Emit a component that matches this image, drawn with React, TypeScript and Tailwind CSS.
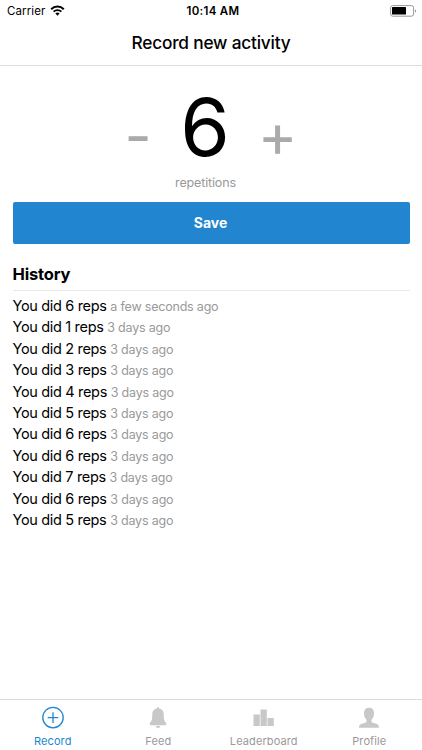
import React from 'react'

interface HistoryEntry {
  id: number
  reps: number
  when: string
}

const history: HistoryEntry[] = [
  { id: 11, reps: 6, when: 'a few seconds ago' },
  { id: 10, reps: 1, when: '3 days ago' },
  { id: 9, reps: 2, when: '3 days ago' },
  { id: 8, reps: 3, when: '3 days ago' },
  { id: 7, reps: 4, when: '3 days ago' },
  { id: 6, reps: 5, when: '3 days ago' },
  { id: 5, reps: 6, when: '3 days ago' },
  { id: 4, reps: 6, when: '3 days ago' },
  { id: 3, reps: 7, when: '3 days ago' },
  { id: 2, reps: 6, when: '3 days ago' },
  { id: 1, reps: 5, when: '3 days ago' },
]

function WifiIcon() {
  return (
    <svg className="-mt-px" width="15" height="11" viewBox="0 0 14 11" fill="none" stroke="#000">
      <path d="M0.7 4.2a8.9 8.9 0 0 1 12.6 0" strokeWidth="2" />
      <path d="M3.1 6.7a5.5 5.5 0 0 1 7.8 0" strokeWidth="1.8" />
      <path d="M7 10.7L4.9 8.6a3 3 0 0 1 4.2 0z" fill="#000" stroke="none" />
    </svg>
  )
}

function BatteryIcon() {
  return (
    <svg width="27" height="12" viewBox="0 0 27 12">
      <rect x="0.6" y="0.6" width="23" height="10.6" rx="2.2" fill="#fff" stroke="#999" />
      <rect x="2" y="2" width="14" height="7.6" rx="0.6" fill="#000" />
      <path d="M25 4.2c1.4.5 1.4 3 0 3.5z" fill="#999" />
    </svg>
  )
}

function RecordIcon() {
  return (
    <svg width="24" height="24" viewBox="0 0 24 24" fill="none" stroke="#2185d0" strokeWidth="1.3">
      <circle cx="12" cy="11.6" r="10.2" />
      <path d="M12 6.3v10.6M6.7 11.6h10.6" />
    </svg>
  )
}

function FeedIcon() {
  return (
    <svg width="24" height="24" viewBox="0 0 24 24" fill="#c8c8c8">
      <path d="M12 1.2c.8 0 1.2.5 1.2 1.2 3.1.6 4.5 3 4.5 5.7 0 5.4.6 7.3 2.5 9v1.6c0 .3-.2.5-.5.5H4.3c-.3 0-.5-.2-.5-.5v-1.6c1.9-1.7 2.5-3.6 2.5-9 0-2.7 1.4-5.1 4.500-5.700 0-.7.4-1.200 1.200-1.200z" />
      <path d="M9.700 20h4.600c-.3 1.300-1.200 1.900-2.300 1.900s-2-.6-2.300-1.900z" />
    </svg>
  )
}

function LeaderboardIcon() {
  return (
    <svg width="24" height="24" viewBox="0 0 24 24" fill="#c8c8c8">
      <path d="M1.5 8.500h6.300v11.500H1.500zM8.500 3.500h6.300V20H8.500zM15.500 12h6.300v8h-6.300z" />
    </svg>
  )
}

function ProfileIcon() {
  return (
    <svg width="24" height="24" viewBox="0 0 24 24" fill="#c8c8c8">
      <path d="M12 1.800c3 0 5 1.900 5 5.100 0 2.600-.6 4.700-2.100 6.300-.5.6-.5 1.400-.4 2.100.2 1.300 1.500 1.700 3.700 2.300 2.700.8 3.800 1.400 3.800 4.200H2c0-2.800 1.100-3.400 3.800-4.200 2.200-.6 3.500-1 3.700-2.300.1-.7.1-1.500-.4-2.100C7.600 11.600 7 9.500 7 6.900 7 3.700 9 1.800 12 1.800z" />
    </svg>
  )
}

const tabs = [
  { label: 'Record', icon: <RecordIcon />, active: true },
  { label: 'Feed', icon: <FeedIcon />, active: false },
  { label: 'Leaderboard', icon: <LeaderboardIcon />, active: false },
  { label: 'Profile', icon: <ProfileIcon />, active: false },
]

export default function App() {
  const [reps, setReps] = React.useState(6)

  return (
    <div className="flex h-[750px] w-[422px] flex-col overflow-hidden bg-white font-['Inter',sans-serif] text-black">
      <header className="h-[66px] border-b border-[#dcdcdc]">
        <div className="grid h-[22px] grid-cols-3 items-center pl-[7px] pr-[5px] text-[11.5px]">
          <div className="flex items-center gap-[5px]">
            <span className="pt-[2px] tracking-[0.1px]">Carrier</span>
            <WifiIcon />
          </div>
          <div className="pt-[2px] pl-[2px] text-center font-semibold tracking-[0.3px]">10:14 AM</div>
          <div className="flex justify-end">
            <BatteryIcon />
          </div>
        </div>
        <h1 className="pt-[8px] text-center text-[17.3px] font-medium leading-[26px] tracking-[-0.2px]">
          Record new activity
        </h1>
      </header>

      <main className="flex-1 px-[12.5px]">
        <div className="flex h-[108px] items-center justify-center pt-[14px] pr-[4px]">
          <button
            className="w-[42px] pt-[18px] pl-[2px] text-center text-[59px] leading-[60px] text-[#aaa]"
            onClick={() => setReps(reps - 1)}
          >
            -
          </button>
          <div className="w-[94px] text-center text-[80px] leading-[90px]">{reps}</div>
          <button
            className="w-[50px] pt-[16px] pl-px text-center text-[60px] leading-[60px] text-[#aaa]"
            onClick={() => setReps(reps + 1)}
          >
            +
          </button>
        </div>
        <div className="h-[28px] pr-[11px] text-center text-[12.5px] leading-[18px] tracking-[-0.15px] text-[#999]">
          repetitions
        </div>
        <button className="block h-[41.5px] w-full rounded-[2px] bg-[#2185d0] pr-px text-[14px] font-bold text-white">
          Save
        </button>

        <h2 className="mt-[18px] h-[29px] border-b border-[#e8e8e8] text-[16.5px] font-bold leading-[24px] tracking-[-0.15px]">
          History
        </h2>
        <ul className="pt-[4.5px]">
          {history.map((entry) => (
            <li key={entry.id} className="h-[21.4px] whitespace-nowrap text-[14.5px] leading-[21.4px] tracking-[-0.33px]">
              You did {entry.reps} reps{' '}
              <span className="text-[12.5px] tracking-[-0.2px] text-[#999]">{entry.when}</span>
            </li>
          ))}
        </ul>
      </main>

      <nav className="grid h-[51px] grid-cols-4 border-t border-[#dcdcdc] pt-[6px]">
        {tabs.map((tab) => (
          <div key={tab.label} className="flex flex-col items-center">
            {tab.icon}
            <span
              className={
                tab.active
                  ? 'mt-[3px] text-[11px] leading-[16px] tracking-[0.1px] text-[#2185d0]'
                  : 'mt-[3px] text-[11px] leading-[16px] tracking-[0.1px] text-[#999]'
              }
            >
              {tab.label}
            </span>
          </div>
        ))}
      </nav>
    </div>
  )
}
